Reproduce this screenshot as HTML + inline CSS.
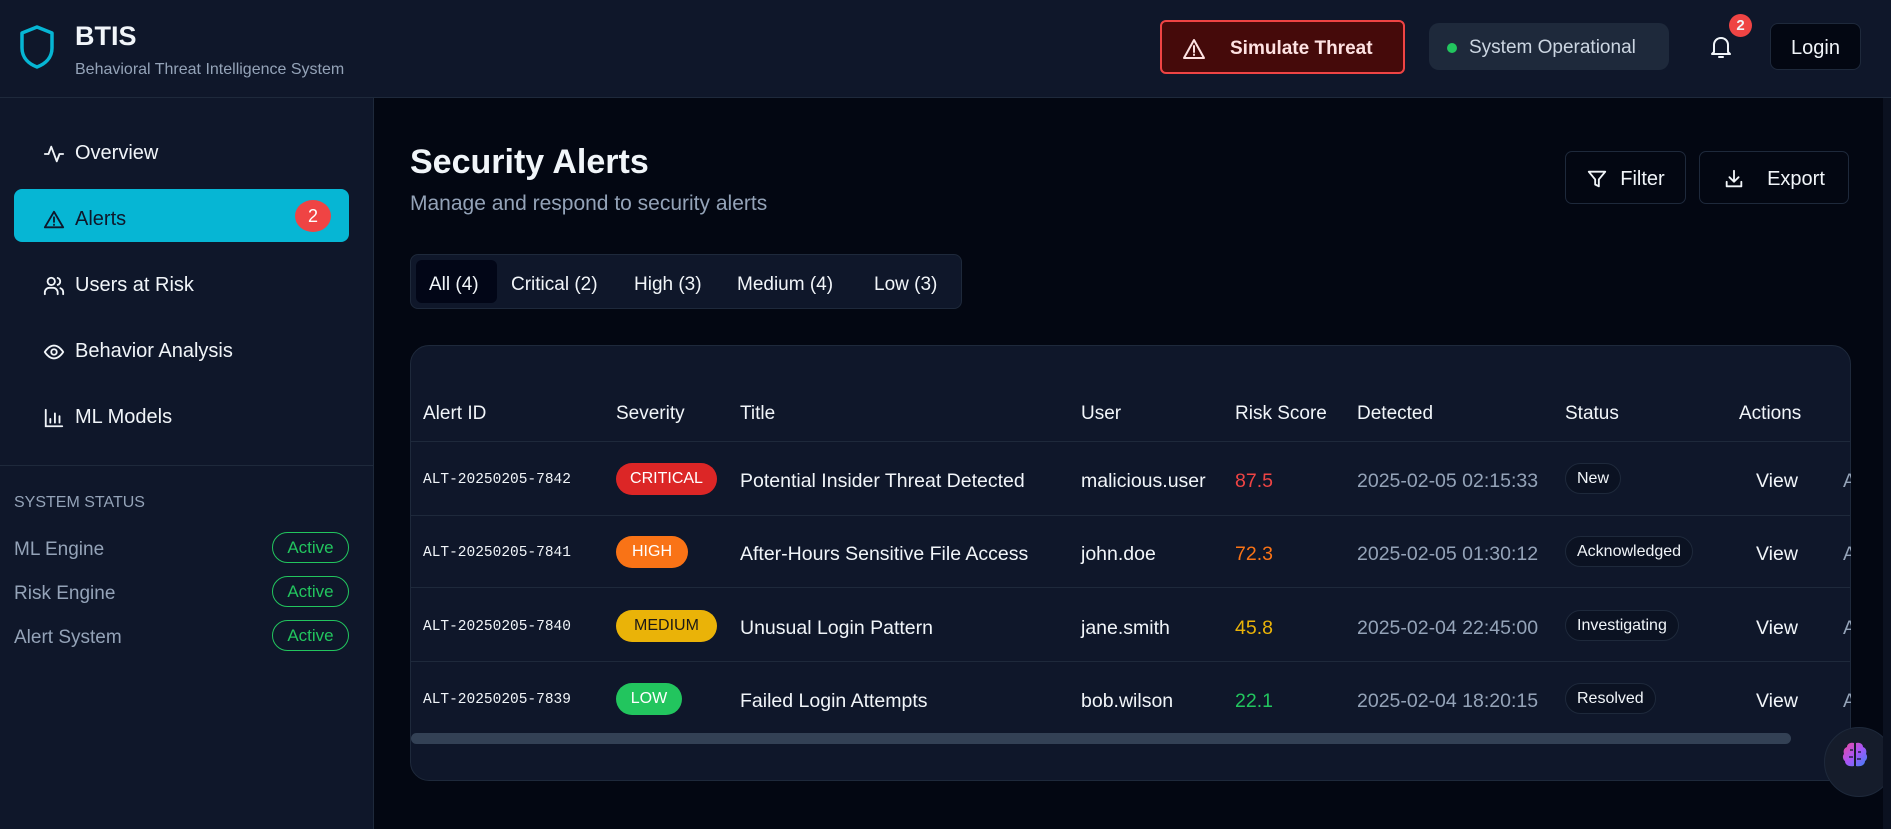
<!DOCTYPE html>
<html><head><meta charset="utf-8"><style>
*{box-sizing:border-box;margin:0;padding:0}
body{width:1891px;height:829px;overflow:hidden;background:#030712;font-family:"Liberation Sans",sans-serif;color:#f1f5f9;position:relative}
.a{position:absolute;white-space:nowrap}
.hdr{left:0;top:0;width:1891px;height:98px;background:#0f172a;border-bottom:1px solid #1e293b}
.side{left:0;top:98px;width:374px;height:731px;background:#0f172a;border-right:1px solid #1e293b}
.nav{left:43px;font-size:20px;color:#f1f5f9;display:flex;align-items:center;margin-top:3px}
.nav svg{margin-right:10px}
.nav span{margin-left:0!important}
.btn{border:1px solid #1e293b;background:#030712;border-radius:7px;display:flex;align-items:center;justify-content:center;font-size:20px}
.pill{border:1.5px solid #22c55e;border-radius:16px;color:#22c55e;font-size:17px;display:flex;align-items:center;justify-content:center;width:77px;height:31px;left:272px}
.sl{left:14px;font-size:19px;color:#94a3b8}
.th{top:403px;font-size:19px;color:#f1f5f9}
.id{font-family:"Liberation Mono",monospace;font-size:14.5px;left:423px;margin-top:2px}
.sev{left:616px;height:32px;border-radius:16px;font-size:16px;display:flex;align-items:center;justify-content:center;color:#fff}
.td{font-size:19.5px;margin-top:3px}
.st{left:1565px;height:31px;border-radius:16px;border:1px solid #1e293b;background:#0b1222;font-size:16px;display:flex;align-items:center;padding:0 11px}
.sep{left:411px;width:1439px;height:1px;background:#1e293b}
</style></head><body>
<div class="a hdr"></div>
<svg class="a" style="left:19px;top:24px" width="36" height="46" viewBox="0 0 36 46"><path d="M18 3 L33 9 V24 C33 34 26 40 18 43 C10 40 3 34 3 24 V9 Z" fill="none" stroke="#06b6d4" stroke-width="3.5" stroke-linejoin="round"/></svg>
<div class="a" style="left:75px;top:21px;font-size:27px;font-weight:bold">BTIS</div>
<div class="a" style="left:75px;top:61px;font-size:16px;color:#94a3b8">Behavioral Threat Intelligence System</div>

<div class="a" style="left:1160px;top:20px;width:245px;height:54px;background:#450a0a;border:2.5px solid #ef4444;border-radius:6px;display:flex;align-items:center;font-weight:bold;font-size:19px;color:#fee2e2;padding-top:3px">
<svg style="margin:0 0 0 20px" width="24" height="22" viewBox="0 0 24 22"><path d="M12 2 L22 20 H2 Z" fill="none" stroke="#fee2e2" stroke-width="2" stroke-linejoin="round"/><path d="M12 8v6M12 16.5v.5" stroke="#fee2e2" stroke-width="2" stroke-linecap="round"/></svg>
<span style="margin-left:24px">Simulate Threat</span></div>
<div class="a" style="left:1429px;top:23px;width:240px;height:47px;background:#1e293b;border-radius:10px;display:flex;align-items:center;font-size:19px;color:#cbd5e1;padding-top:3px"><span style="width:10px;height:10px;border-radius:50%;background:#22c55e;margin:0 12px 0 18px"></span>System Operational</div>
<svg class="a" style="left:1709px;top:34px" width="24" height="26" viewBox="0 0 24 26"><path d="M5 18 V11 C5 7 8 4 12 4 C16 4 19 7 19 11 V18 L21 20 H3 Z" fill="none" stroke="#f1f5f9" stroke-width="2" stroke-linejoin="round"/><path d="M10 23 H14" stroke="#f1f5f9" stroke-width="2" stroke-linecap="round"/></svg>
<div class="a" style="left:1729px;top:14px;width:23px;height:23px;border-radius:50%;background:#ef4444;font-size:15px;font-weight:bold;display:flex;align-items:center;justify-content:center">2</div>
<div class="a btn" style="left:1770px;top:23px;width:91px;height:47px;border-radius:8px;padding-top:3px">Login</div>

<div class="a side"></div>
<div class="a nav" style="top:139px"><svg width="22" height="22" viewBox="0 0 24 24"><path d="M2 12h4l3-8 6 16 3-8h4" fill="none" stroke="#f1f5f9" stroke-width="2" stroke-linejoin="round" stroke-linecap="round"/></svg><span>Overview</span></div>
<div class="a" style="left:14px;top:189px;width:335px;height:53px;background:#06b6d4;border-radius:8px"></div>
<div class="a nav" style="top:205px;color:#0f172a"><svg width="22" height="22" viewBox="0 0 24 24"><path d="M12 3 L22 20 H2 Z" fill="none" stroke="#0f172a" stroke-width="2" stroke-linejoin="round"/><path d="M12 9v5M12 17v.5" stroke="#0f172a" stroke-width="2" stroke-linecap="round"/></svg><span>Alerts</span></div>
<div class="a" style="left:295px;top:200px;width:36px;height:32px;border-radius:50%;background:#ef4444;color:#fff;font-size:18px;display:flex;align-items:center;justify-content:center">2</div>
<div class="a nav" style="top:271px"><svg width="22" height="22" viewBox="0 0 24 24"><circle cx="9" cy="7" r="4" fill="none" stroke="#f1f5f9" stroke-width="2"/><path d="M2 21v-2a5 5 0 0 1 5-5h4a5 5 0 0 1 5 5v2M16 3.2a4 4 0 0 1 0 7.6M22 21v-2a5 5 0 0 0-3-4.6" fill="none" stroke="#f1f5f9" stroke-width="2" stroke-linecap="round"/></svg><span>Users at Risk</span></div>
<div class="a nav" style="top:337px"><svg width="22" height="22" viewBox="0 0 24 24"><path d="M2 12s4-7 10-7 10 7 10 7-4 7-10 7S2 12 2 12z" fill="none" stroke="#f1f5f9" stroke-width="2"/><circle cx="12" cy="12" r="3" fill="none" stroke="#f1f5f9" stroke-width="2"/></svg><span>Behavior Analysis</span></div>
<div class="a nav" style="top:403px"><svg width="22" height="22" viewBox="0 0 24 24"><path d="M3 3v18h18M8 17v-4M13 17V7M18 17v-7" fill="none" stroke="#f1f5f9" stroke-width="2" stroke-linecap="round"/></svg><span>ML Models</span></div>
<div class="a" style="left:0;top:465px;width:374px;height:1px;background:#1e293b"></div>
<div class="a" style="left:14px;top:494px;font-size:16px;color:#94a3b8">SYSTEM STATUS</div>
<div class="a sl" style="top:539px">ML Engine</div><div class="a pill" style="top:532px">Active</div>
<div class="a sl" style="top:583px">Risk Engine</div><div class="a pill" style="top:576px">Active</div>
<div class="a sl" style="top:627px">Alert System</div><div class="a pill" style="top:620px">Active</div>

<div class="a" style="left:410px;top:143px;font-size:34px;font-weight:bold">Security Alerts</div>
<div class="a" style="left:410px;top:192px;font-size:21px;color:#94a3b8">Manage and respond to security alerts</div>
<div class="a btn" style="left:1565px;top:151px;width:121px;height:53px;padding-top:3px"><svg width="22" height="22" viewBox="0 0 24 24" style="margin-right:12px"><path d="M3 4h18l-7 8.5V20l-4-2v-5.5Z" fill="none" stroke="#f1f5f9" stroke-width="2" stroke-linejoin="round"/></svg>Filter</div>
<div class="a btn" style="left:1699px;top:151px;width:150px;height:53px;padding-top:3px"><svg width="22" height="22" viewBox="0 0 24 24" style="margin-right:22px"><path d="M4 15v5h16v-5M12 3v12M7 10l5 5 5-5" fill="none" stroke="#f1f5f9" stroke-width="2" stroke-linecap="round" stroke-linejoin="round"/></svg>Export</div>

<div class="a" style="left:410px;top:254px;width:552px;height:55px;background:#0f172a;border:1px solid #1e293b;border-radius:8px"></div>
<div class="a" style="left:416px;top:260px;width:81px;height:43px;background:#020617;border-radius:6px"></div>
<div class="a" style="top:274px;left:429px;font-size:19px">All (4)</div>
<div class="a" style="top:274px;left:511px;font-size:19px">Critical (2)</div>
<div class="a" style="top:274px;left:634px;font-size:19px">High (3)</div>
<div class="a" style="top:274px;left:737px;font-size:19px">Medium (4)</div>
<div class="a" style="top:274px;left:874px;font-size:19px">Low (3)</div>

<div class="a" style="left:410px;top:345px;width:1441px;height:436px;background:#0f172a;border:1px solid #1e293b;border-radius:19px;overflow:hidden"></div>
<div class="a th" style="left:423px">Alert ID</div><div class="a th" style="left:616px">Severity</div><div class="a th" style="left:740px">Title</div><div class="a th" style="left:1081px">User</div><div class="a th" style="left:1235px">Risk Score</div><div class="a th" style="left:1357px">Detected</div><div class="a th" style="left:1565px">Status</div><div class="a th" style="left:1739px">Actions</div>
<div class="a sep" style="top:441px"></div><div class="a sep" style="top:515px"></div><div class="a sep" style="top:587px"></div><div class="a sep" style="top:661px"></div>

<div class="a id" style="top:470px">ALT-20250205-7842</div>
<div class="a sev" style="top:463px;width:101px;background:#dc2626">CRITICAL</div>
<div class="a td" style="left:740px;top:467px">Potential Insider Threat Detected</div>
<div class="a td" style="left:1081px;top:467px">malicious.user</div>
<div class="a td" style="left:1235px;top:467px;color:#ef4444">87.5</div>
<div class="a td" style="left:1357px;top:467px;color:#94a3b8">2025-02-05 02:15:33</div>
<div class="a st" style="top:463px">New</div>
<div class="a td" style="left:1756px;top:467px">View</div><div class="a td" style="left:1843px;top:467px;width:8px;overflow:hidden;color:#94a3b8">A</div>

<div class="a id" style="top:543px">ALT-20250205-7841</div>
<div class="a sev" style="top:536px;width:72px;background:#f97316">HIGH</div>
<div class="a td" style="left:740px;top:540px">After-Hours Sensitive File Access</div>
<div class="a td" style="left:1081px;top:540px">john.doe</div>
<div class="a td" style="left:1235px;top:540px;color:#f97316">72.3</div>
<div class="a td" style="left:1357px;top:540px;color:#94a3b8">2025-02-05 01:30:12</div>
<div class="a st" style="top:536px">Acknowledged</div>
<div class="a td" style="left:1756px;top:540px">View</div><div class="a td" style="left:1843px;top:540px;width:8px;overflow:hidden;color:#94a3b8">A</div>

<div class="a id" style="top:617px">ALT-20250205-7840</div>
<div class="a sev" style="top:610px;width:101px;background:#eab308;color:#1c1917">MEDIUM</div>
<div class="a td" style="left:740px;top:614px">Unusual Login Pattern</div>
<div class="a td" style="left:1081px;top:614px">jane.smith</div>
<div class="a td" style="left:1235px;top:614px;color:#eab308">45.8</div>
<div class="a td" style="left:1357px;top:614px;color:#94a3b8">2025-02-04 22:45:00</div>
<div class="a st" style="top:610px">Investigating</div>
<div class="a td" style="left:1756px;top:614px">View</div><div class="a td" style="left:1843px;top:614px;width:8px;overflow:hidden;color:#94a3b8">A</div>

<div class="a id" style="top:690px">ALT-20250205-7839</div>
<div class="a sev" style="top:683px;width:66px;background:#22c55e">LOW</div>
<div class="a td" style="left:740px;top:687px">Failed Login Attempts</div>
<div class="a td" style="left:1081px;top:687px">bob.wilson</div>
<div class="a td" style="left:1235px;top:687px;color:#22c55e">22.1</div>
<div class="a td" style="left:1357px;top:687px;color:#94a3b8">2025-02-04 18:20:15</div>
<div class="a st" style="top:683px">Resolved</div>
<div class="a td" style="left:1756px;top:687px">View</div><div class="a td" style="left:1843px;top:687px;width:8px;overflow:hidden;color:#94a3b8">A</div>

<div class="a" style="left:411px;top:733px;width:1380px;height:11px;background:#334155;border-radius:6px"></div>

<div class="a" style="left:1824px;top:727px;width:70px;height:70px;border-radius:50%;background:#151c2b;border:1px solid #1e293b"></div>
<svg class="a" style="left:1840px;top:740px" width="30" height="30" viewBox="0 0 30 30"><defs><linearGradient id="g" x1="0" y1="0" x2="1" y2="1"><stop offset="0" stop-color="#ec4899"/><stop offset=".5" stop-color="#a855f7"/><stop offset="1" stop-color="#3b82f6"/></linearGradient></defs><path d="M14 3C10 2 7 4 7 7C4 8 3 11 4 14C2 16 3 20 5 21C5 25 9 27 14 26Z M16 3C20 2 23 4 23 7C26 8 27 11 26 14C28 16 27 20 25 21C25 25 21 27 16 26Z" fill="url(#g)"/><path d="M10 10h3M9 17h4M18 12h3M17 19h4" stroke="#0f172a" stroke-width="1.2"/></svg>
<div class="a" style="left:1883px;top:98px;width:8px;height:731px;background:#0b1120"></div>
</body></html>
